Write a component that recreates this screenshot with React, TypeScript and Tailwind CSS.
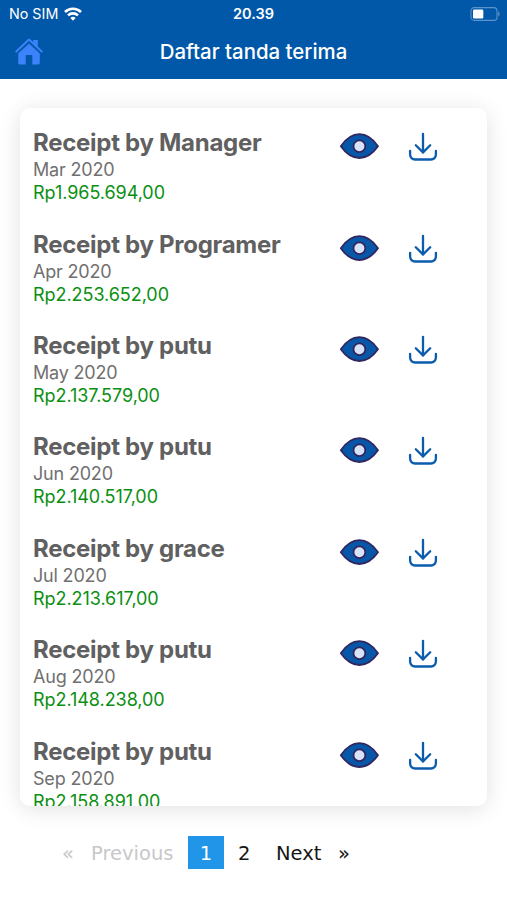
type Receipt = {
  id: number;
  title: string;
  month: string;
  amount: string;
};

const receipts: Receipt[] = [
  { id: 1, title: "Receipt by Manager", month: "Mar 2020", amount: "Rp1.965.694,00" },
  { id: 2, title: "Receipt by Programer", month: "Apr 2020", amount: "Rp2.253.652,00" },
  { id: 3, title: "Receipt by putu", month: "May 2020", amount: "Rp2.137.579,00" },
  { id: 4, title: "Receipt by putu", month: "Jun 2020", amount: "Rp2.140.517,00" },
  { id: 5, title: "Receipt by grace", month: "Jul 2020", amount: "Rp2.213.617,00" },
  { id: 6, title: "Receipt by putu", month: "Aug 2020", amount: "Rp2.148.238,00" },
  { id: 7, title: "Receipt by putu", month: "Sep 2020", amount: "Rp2.158.891,00" },
];

function WifiIcon() {
  return (
    <svg width="18" height="14" viewBox="0 0 18 14" fill="none" stroke="#fff" strokeWidth="2.6">
      <path d="M1 5a11.4 11.4 0 0 1 16 0" />
      <path d="M4 8.4a7.2 7.2 0 0 1 10 0" />
      <path d="M6.4 11 9 13.8 11.6 11a3.7 3.7 0 0 0-5.2 0Z" fill="#fff" stroke="none" />
    </svg>
  );
}

function BatteryIcon() {
  return (
    <svg width="31" height="14" viewBox="0 0 31 14">
      <rect x="2" y="0.6" width="26" height="12.8" rx="3.2" fill="none" stroke="#5c93c9" strokeWidth="1.1" />
      <rect x="4" y="2.5" width="10.3" height="9" rx="1.3" fill="#fff" />
      <path d="M29.2 4.8c1.9.5 1.9 3.9 0 4.4Z" fill="#5c93c9" />
    </svg>
  );
}

function HomeIcon() {
  return (
    <svg width="28" height="27" viewBox="0 0 28 27" fill="#3b82fb">
      <path d="M18.2 2h4.6v7.4l-4.6-4.1Z" />
      <path d="M14 5.6 24.8 15.4v9.3a1.8 1.8 0 0 1-1.8 1.8h-5.7v-8.7a.8.8 0 0 0-.8-.8h-5a.8.8 0 0 0-.8.8v8.7H5a1.8 1.8 0 0 1-1.8-1.8v-9.3Z" />
      <path d="M1.3 13.5 14 1.5l12.7 12" fill="none" stroke="#3b82fb" strokeWidth="1.9" strokeLinecap="round" strokeLinejoin="round" />
    </svg>
  );
}

function EyeIcon() {
  return (
    <svg width="40" height="26" viewBox="0 0 40 26" stroke="#32265f" strokeWidth="1.8" strokeLinejoin="round">
      <path d="M1.8 13.2C7.2 5.5 13.4 1.2 20.4 1.2s13.2 4.3 18.6 12c-5.4 7.6-11.6 11.8-18.6 11.8S7.2 20.8 1.8 13.2Z" fill="#0757a8" />
      <circle cx="20.4" cy="13.2" r="5.9" fill="#d9e3f8" />
    </svg>
  );
}

function DownloadIcon() {
  return (
    <svg
      width="30"
      height="30"
      viewBox="0 0 30 30"
      fill="none"
      stroke="#0b5cad"
      strokeWidth="2.3"
      strokeLinecap="round"
      strokeLinejoin="round"
    >
      <path d="M15 1.8v18.6" />
      <path d="m7.8 13.2 7.2 7.2 7.2-7.2" />
      <path d="M2.1 18.8v3.8a4.9 4.9 0 0 0 4.9 4.9h16a4.9 4.9 0 0 0 4.9-4.9v-3.8" />
    </svg>
  );
}

function ReceiptItem({ receipt }: { receipt: Receipt }) {
  return (
    <li className="flex h-[101.4px] shrink-0 items-start">
      <div className="w-[306px] whitespace-nowrap">
        <h2 className="text-[24px] leading-[30px] font-[650] tracking-[-0.28px] text-[#606060]">{receipt.title}</h2>
        <p className="text-[18px] leading-[23px] tracking-[-0.18px] text-[#707070]">{receipt.month}</p>
        <p className="text-[18px] leading-[23px] tracking-[-0.05px] text-[#0a8f12]">{receipt.amount}</p>
      </div>
      <button type="button" aria-label="Lihat" className="mt-[5px]">
        <EyeIcon />
      </button>
      <button type="button" aria-label="Unduh" className="mt-[4px] ml-[29px]">
        <DownloadIcon />
      </button>
    </li>
  );
}

export default function App() {
  return (
    <div className="flex h-[900px] w-[507px] flex-col overflow-hidden bg-white font-['Inter',sans-serif]">
      <header className="h-[79px] bg-[#0258a8] text-white">
        {/* ステータスバー */}
        <div className="grid h-[27px] grid-cols-3 items-center pr-[7px] pl-[9px]">
          <div className="flex items-center gap-[6px] text-[14.3px]">
            <span>No SIM</span>
            <WifiIcon />
          </div>
          <span className="pr-[2px] text-center text-[14.5px] font-semibold">20.39</span>
          <div className="flex justify-end">
            <BatteryIcon />
          </div>
        </div>
        {/* タイトル */}
        <div className="grid h-[52px] grid-cols-[46px_1fr_46px] items-center">
          <a href="#" aria-label="Home" className="-mt-[3px] pl-[15px]">
            <HomeIcon />
          </a>
          <h1 className="-mt-px text-center text-[20.4px] font-[550]">Daftar tanda terima</h1>
        </div>
      </header>

      <main className="mx-5 mt-[29px] h-[698px] w-[467px] shrink-0 rounded-[10px] shadow-[0_3px_22px_rgba(0,0,0,0.12)]">
        <ul className="flex h-full flex-col overflow-hidden rounded-[10px] bg-white pt-[20.3px] pl-[13px]">
          {receipts.map((receipt) => (
            <ReceiptItem key={receipt.id} receipt={receipt} />
          ))}
        </ul>
      </main>

      {/* ページネーション */}
      <nav className="mt-[30px] flex h-[33px] items-center pl-[62px] font-['DejaVu_Sans',sans-serif] text-[19.5px] text-[#161616]">
        <span className="w-[29px] pt-[2px] text-[#c8c8c8]">«</span>
        <span className="w-[97px] pt-[2px] text-[#c8c8c8]">Previous</span>
        <span className="flex h-full w-[36px] items-center justify-center bg-[#2196e8] pt-[2px] text-white">1</span>
        <span className="w-[52px] pt-[2px] pl-[14px]">2</span>
        <span className="w-[62px] pt-[2px]">Next</span>
        <span className="pt-[2px]">»</span>
      </nav>
    </div>
  );
}
